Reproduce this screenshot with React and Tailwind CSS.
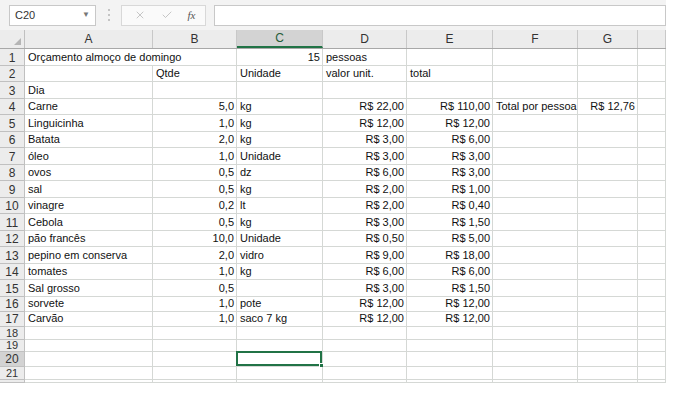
import React from 'react';
import { X, Check } from 'lucide-react';

const colWidths = ['w-[128px]', 'w-[84px]', 'w-[86px]', 'w-[84px]', 'w-[86px]', 'w-[85px]', 'w-[60px]', 'w-[28px]'];
const colNames = ['A', 'B', 'C', 'D', 'E', 'F', 'G', ''];

const rows = [
    { n: '1', h: 'h-[17px]', c: ['Orçamento almoço de domingo', '', '15', 'pessoas'] },
    { n: '2', h: 'h-[16px]', c: ['', 'Qtde', 'Unidade', 'valor unit.', 'total'] },
    { n: '3', h: 'h-[17px]', c: ['Dia'] },
    { n: '4', h: 'h-[16px]', c: ['Carne', '5,0', 'kg', 'R$ 22,00', 'R$ 110,00', 'Total por pessoa', 'R$ 12,76'] },
    { n: '5', h: 'h-[17px]', c: ['Linguicinha', '1,0', 'kg', 'R$ 12,00', 'R$ 12,00'] },
    { n: '6', h: 'h-[16px]', c: ['Batata', '2,0', 'kg', 'R$ 3,00', 'R$ 6,00'] },
    { n: '7', h: 'h-[17px]', c: ['óleo', '1,0', 'Unidade', 'R$ 3,00', 'R$ 3,00'] },
    { n: '8', h: 'h-[16px]', c: ['ovos', '0,5', 'dz', 'R$ 6,00', 'R$ 3,00'] },
    { n: '9', h: 'h-[17px]', c: ['sal', '0,5', 'kg', 'R$ 2,00', 'R$ 1,00'] },
    { n: '10', h: 'h-[16px]', c: ['vinagre', '0,2', 'lt', 'R$ 2,00', 'R$ 0,40'] },
    { n: '11', h: 'h-[17px]', c: ['Cebola', '0,5', 'kg', 'R$ 3,00', 'R$ 1,50'] },
    { n: '12', h: 'h-[16px]', c: ['pão francês', '10,0', 'Unidade', 'R$ 0,50', 'R$ 5,00'] },
    { n: '13', h: 'h-[17px]', c: ['pepino em conserva', '2,0', 'vidro', 'R$ 9,00', 'R$ 18,00'] },
    { n: '14', h: 'h-[16px]', c: ['tomates', '1,0', 'kg', 'R$ 6,00', 'R$ 6,00'] },
    { n: '15', h: 'h-[17px]', c: ['Sal grosso', '0,5', '', 'R$ 3,00', 'R$ 1,50'] },
    { n: '16', h: 'h-[15px]', c: ['sorvete', '1,0', 'pote', 'R$ 12,00', 'R$ 12,00'] },
    { n: '17', h: 'h-[15px]', c: ['Carvão', '1,0', 'saco 7 kg', 'R$ 12,00', 'R$ 12,00'] },
    { n: '18', h: 'h-[13px]', c: [], small: true },
    { n: '19', h: 'h-[12px]', c: [], small: true },
    { n: '20', h: 'h-[15px]', c: [], sel: true },
    { n: '21', h: 'h-[13px]', c: [], small: true },
    { n: '', h: 'h-[3px]', c: [] },
];

const isNumber = (v) => /^(R\$ )?[\d.,]+$/.test(v);

const Cell = ({ value, width, noRight, selected }) => (
    <div
        className={`${width} relative h-full shrink-0 border-b border-[#d5d8d5] ${noRight ? '' : 'border-r'} flex items-end pb-[1px] pl-[3px] pr-[2px] leading-[13px] whitespace-nowrap overflow-visible ${isNumber(value) ? 'justify-end' : 'justify-start'}`}
    >
        {value}
        {selected && (
            <div className="absolute -left-[1px] -top-[1px] -right-[0px] -bottom-[0px] border-2 border-[#217346]">
                <div className="absolute -right-[4px] -bottom-[4px] w-[5px] h-[5px] bg-[#217346] border border-white" />
            </div>
        )}
    </div>
);

export default function App() {
    return (
        <div className="w-[674px] h-[393px] bg-white overflow-hidden text-[11px] text-[#111]" style={{ fontFamily: '"Liberation Sans", Arial, sans-serif' }}>
            <div className="w-[666px]">
                {/* Formula bar */}
                <div className="h-[30px] bg-[#f3f3f3] flex items-center pl-[9px]">
                    <div className="w-[87px] h-[21px] bg-white border border-[#c8c8c8] flex items-center justify-between pl-[5px] pr-[5px] text-[11px] text-[#333]">
                        <span>C20</span>
                        <span className="text-[8px] text-[#777]">▼</span>
                    </div>
                    <div className="w-[25px] flex flex-col items-center gap-[3px]">
                        <div className="w-[2px] h-[2px] bg-[#c4c4c4]" />
                        <div className="w-[2px] h-[2px] bg-[#c4c4c4]" />
                        <div className="w-[2px] h-[2px] bg-[#c4c4c4]" />
                    </div>
                    <div className="w-[85px] h-[21px] bg-[#fafafa] border border-[#d8d8d8] flex items-center justify-around pl-[4px] pr-[2px]">
                        <X size={12} strokeWidth={1.5} className="text-[#b4b4b4]" />
                        <Check size={12} strokeWidth={1.5} className="text-[#b4b4b4]" />
                        <span className="italic text-[#555] text-[11px]" style={{ fontFamily: '"Liberation Serif", serif' }}>fx</span>
                    </div>
                    <div className="ml-[8px] flex-1 h-[21px] bg-white border border-[#c8c8c8]" />
                </div>

                {/* Column headers */}
                <div className="h-[19px] flex bg-[#ececec] border-b border-[#a8a8a8] text-[12px] text-[#333]">
                    <div className="w-[25px] shrink-0 border-r border-[#c0c0c0] relative">
                        <div className="absolute right-[3px] bottom-[3px] w-0 h-0 border-l-[7px] border-l-transparent border-b-[7px] border-b-[#b5b5b5]" />
                    </div>
                    {colNames.map((name, i) => (
                        <div
                            key={i}
                            className={`${colWidths[i]} shrink-0 border-r border-[#c8c8c8] flex items-center justify-center ${name === 'C' ? 'bg-[#d3d3d3] border-b-2 border-b-[#217346] text-[#1f5c38]' : ''}`}
                        >
                            {name}
                        </div>
                    ))}
                </div>

                {/* Body */}
                {rows.map((row) => (
                    <div key={row.n + row.h} className={`${row.h} flex`}>
                        <div
                            className={`w-[25px] shrink-0 border-r border-b border-[#c0c0c0] flex items-end justify-center ${row.small ? 'pb-0 text-[11px] leading-[11px]' : 'pb-[1px] text-[12px] leading-[12px]'} text-[#333] ${row.sel ? 'bg-[#d3d3d3]' : 'bg-[#ececec]'}`}
                        >
                            {row.n}
                        </div>
                        {colWidths.map((w, i) => (
                            <Cell
                                key={i}
                                width={w}
                                value={row.c[i] || ''}
                                noRight={row.n === '1' && i === 0}
                                selected={row.sel && i === 2}
                            />
                        ))}
                    </div>
                ))}
            </div>
        </div>
    );
}
